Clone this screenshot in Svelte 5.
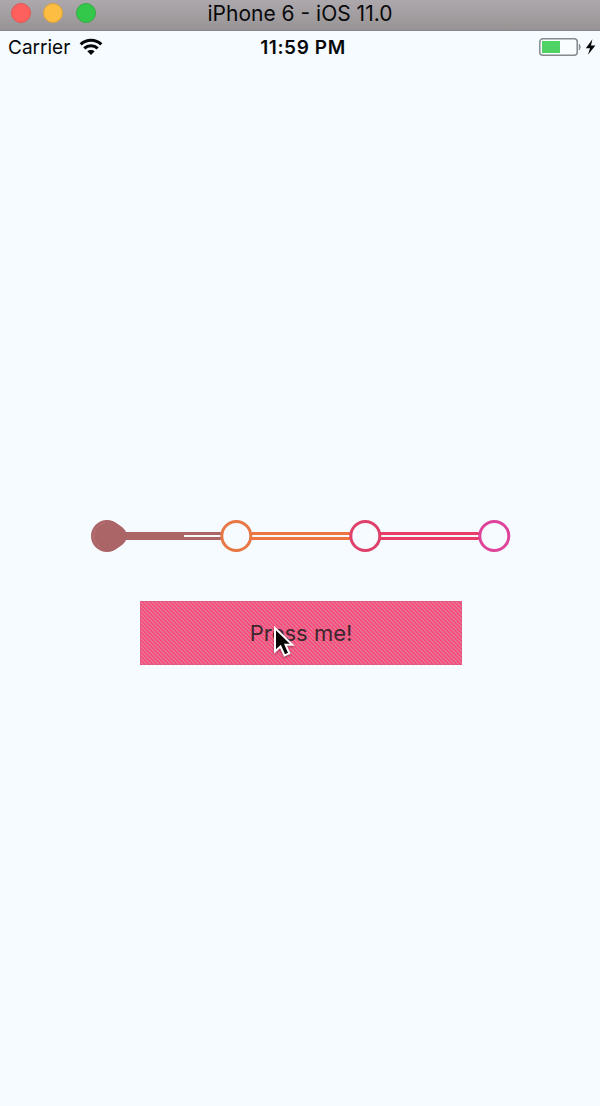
<script>
  const steps = [
    { x: 16, color: '#ab6567' },
    { x: 145, color: '#e77845' },
    { x: 274, color: '#df416b' },
    { x: 403, color: '#de449a' }
  ];
  const links = [
    { x: 32, color: '#ab6567' },
    { x: 161, color: '#ee7540' },
    { x: 290, color: '#e83d69' }
  ];
</script>

<div class="window">
  <header class="titlebar">
    <div class="lights">
      <span class="light close"></span>
      <span class="light minimize"></span>
      <span class="light zoom"></span>
    </div>
    <span class="title">iPhone 6 - iOS 11.0</span>
    <span></span>
  </header>

  <div class="status">
    <div class="carrier">
      <span class="name">Carrier</span>
      <svg width="24" height="18" viewBox="0 0 24 18" aria-hidden="true">
        <g fill="none" stroke="#050708" stroke-width="3.1">
          <path d="M1.7 6.3C7.4.8 16.6.8 22.3 6.3" />
          <path d="M5.3 10.4C9 6.9 15 6.9 18.7 10.4" />
        </g>
        <path fill="#050708" d="M8.3 13.3C10.4 11.4 13.6 11.4 15.7 13.3L12 17Z" />
      </svg>
    </div>
    <span class="time">11:59 PM</span>
    <div class="power">
      <svg width="58" height="20" viewBox="0 0 58 20" aria-hidden="true">
        <rect x=".8" y="1.8" width="37.4" height="16.4" rx="3" fill="#fafdff" stroke="#858a8e" stroke-width="1.5" />
        <rect x="3" y="4" width="18" height="12" fill="#4fd364" />
        <path d="M40.2 7Q42.6 10 40.2 13Z" fill="#858a8e" stroke="#858a8e" stroke-width=".7" />
        <path d="M53.4 2.2L46.8 11.2H51L49 17.8L56.4 8.4H52Z" fill="#050708" />
      </svg>
    </div>
  </div>

  <main>
    <svg class="stepper" width="420" height="32" viewBox="0 0 420 32" aria-hidden="true">
      {#each links as link}
        <rect x={link.x - 1} y="12" width="99" height="8" fill={link.color} />
        <rect x={link.x - 1} y="15" width="99" height="2" fill="#f7f8fb" />
      {/each}
      <rect x="30" y="12" width="63" height="8" fill="#ab6567" />
      {#each steps as step, i}
        <circle cx={step.x + (i ? 0.3 : 0)} cy="16" r="14.5" fill={i === 0 ? step.color : '#f5fbff'} stroke={step.color} stroke-width="3" />
      {/each}
      <path d="M22 1.5C27 4.5 33 7 35 12V20C33 25 27 27.5 22 30.5Z" fill="#ab6567" />
      <path d="M14 3A13 13 0 0 0 9 27" fill="none" stroke="#bd7779" stroke-width=".8" />
    </svg>

    <button>
      <span>Press me!</span>
      <svg class="cursor" width="24" height="34" viewBox="0 0 24 34" aria-hidden="true">
        <path d="M3 3V26.5L8.5 21.5L12.5 30.5L17.3 28.3L13.5 19.7H20.3Z" fill="#050505" stroke="#fff" stroke-width="2" />
      </svg>
    </button>
  </main>
</div>

<style>
  :global(body) {
    margin: 0;
    background: #f5fbff;
  }
  .window {
    display: flex;
    flex-direction: column;
    width: 600px;
    height: 1106px;
    overflow: hidden;
    background: #f5fbff;
    color: #08090b;
    font-family: Inter, "Liberation Sans", sans-serif;
  }
  .titlebar {
    box-sizing: border-box;
    display: grid;
    grid-template-columns: 1fr auto 1fr;
    align-items: center;
    height: 31px;
    padding: 0 11px 4px;
    border-bottom: 1px solid #898487;
    background: linear-gradient(#ada8ab, #989395);
  }
  .lights {
    display: flex;
    gap: 12.3px;
  }
  .light {
    box-sizing: border-box;
    width: 20px;
    height: 20px;
    border-radius: 50%;
  }
  .close { background: #fd605d; border: 1px solid #df5654; }
  .minimize { background: #fdbd42; border: 1px solid #dca23b; }
  .zoom { background: #33c849; border: 1px solid #35aa43; }
  .title {
    padding-top: 2px;
    font-size: 21px;
    line-height: 24px;
    white-space: nowrap;
  }
  .status {
    display: grid;
    grid-template-columns: 1fr auto 1fr;
    align-items: center;
    height: 32px;
    padding: 0 3px 0 8px;
    white-space: nowrap;
  }
  .carrier {
    display: flex;
    align-items: center;
    gap: 9px;
    font-size: 19px;
  }
  .time {
    padding-left: 1px;
    font-size: 19px;
    font-weight: 600;
    letter-spacing: 0.6px;
  }
  .power {
    display: flex;
    justify-content: flex-end;
  }
  main {
    display: flex;
    flex-direction: column;
    align-items: center;
    gap: 48.5px;
    padding-top: 457px;
  }
  .stepper {
    display: block;
    margin-left: 2px;
  }
  button {
    position: relative;
    width: 322px;
    height: 64.5px;
    margin-left: 2px;
    padding: 0;
    border: 0;
    background: linear-gradient(45deg, #fb4a78 25%, #e57496 25% 50%, #fb4a78 50% 75%, #e57496 75%) 0 0 / 4px 4px;
    box-shadow: inset 0 0 0 1px rgba(210, 90, 130, 0.5);
    color: #40262f;
    font: 22px Inter, "Liberation Sans", sans-serif;
  }
  .cursor {
    position: absolute;
    left: 132px;
    top: 24px;
    filter: drop-shadow(0 1px 1px rgba(40, 0, 20, 0.45));
  }
</style>
